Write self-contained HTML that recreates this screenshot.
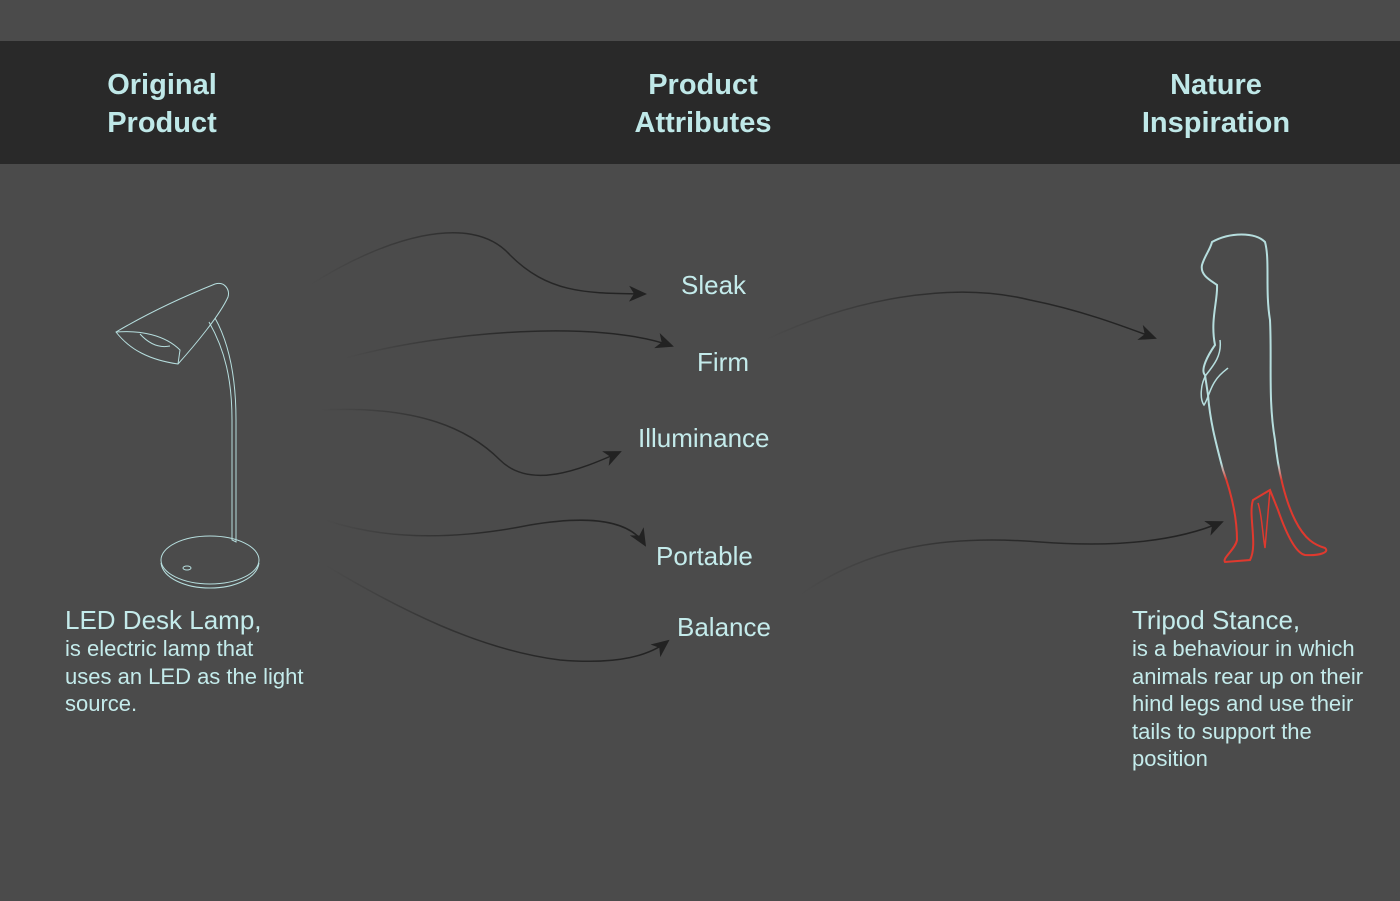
<!DOCTYPE html>
<html><head><meta charset="utf-8"><style>
body{margin:0;width:1400px;height:901px;background:#4b4b4b;overflow:hidden;font-family:"Liberation Sans",sans-serif;position:relative}
.hdr{position:absolute;left:0;top:41px;width:1400px;height:123px;background:#292929}
.h{position:absolute;color:#bfe8e8;font-size:29px;font-weight:bold;line-height:38px;text-align:center;width:300px}
.l{position:absolute;color:#c4ebeb;font-size:26px;font-weight:300}
.d{position:absolute;color:#c4ebeb;font-size:22px;line-height:27.5px}
.d b{font-weight:normal;font-size:26px;display:block;line-height:30px}
svg{position:absolute;left:0;top:0}
</style></head><body>
<div class="hdr"></div>
<div class="h" style="left:12px;top:66px">Original<br>Product</div>
<div class="h" style="left:553px;top:66px">Product<br>Attributes</div>
<div class="h" style="left:1066px;top:66px">Nature<br>Inspiration</div>
<div class="l" style="left:681px;top:270px">Sleak</div>
<div class="l" style="left:697px;top:347px">Firm</div>
<div class="l" style="left:638px;top:423px">Illuminance</div>
<div class="l" style="left:656px;top:541px">Portable</div>
<div class="l" style="left:677px;top:612px">Balance</div>
<div class="d" style="left:65px;top:605px"><b>LED Desk Lamp,</b>is electric lamp that<br>uses an LED as the light<br>source.</div>
<div class="d" style="left:1132px;top:605px"><b>Tripod Stance,</b>is a behaviour in which<br>animals rear up on their<br>hind legs and use their<br>tails to support the<br>position</div>
<svg width="1400" height="901" viewBox="0 0 1400 901">
<defs>
<linearGradient id="g1" x1="0" x2="1"><stop offset="0" stop-color="#222" stop-opacity="0"/><stop offset=".5" stop-color="#222" stop-opacity=".8"/><stop offset="1" stop-color="#222"/></linearGradient>
<linearGradient id="mk" x1="0" y1="0" x2="0" y2="1"><stop offset=".7" stop-color="#b6dede"/><stop offset=".75" stop-color="#e0392e"/></linearGradient>
<marker id="a" markerWidth="20" markerHeight="16" refX="16" refY="8" orient="auto" markerUnits="userSpaceOnUse"><path d="M0,0 L18,8 L0,16 L5,8z" fill="#222"/></marker>
</defs>
<g fill="none" stroke="url(#g1)" stroke-width="1.5" marker-end="url(#a)">
<path d="M310,285 C380,240 470,210 510,255 C550,295 590,293 645,294"/>
<path d="M345,358 C450,330 600,320 672,346"/>
<path d="M320,410 C420,405 470,430 500,460 C530,490 580,470 620,452"/>
<path d="M325,520 C400,545 480,535 530,525 C590,515 630,520 645,545"/>
<path d="M325,565 C400,610 480,650 560,660 C620,665 650,655 668,641"/>
<path d="M765,340 C850,300 950,280 1030,300 C1080,310 1120,325 1155,338"/>
<path d="M800,595 C870,545 950,535 1040,542 C1120,548 1180,540 1222,522"/>
</g>
<g fill="none" stroke="#b6dede" stroke-width="1">
<path d="M116,332 C150,312 185,296 215,284 C225,281 230,290 228,297 C220,315 195,345 178,364 C150,360 130,350 116,332Z"/>
<path d="M116,332 C140,330 165,335 180,350 L178,364"/>
<path d="M140,334 C150,345 160,348 170,346"/>
<path d="M209,322 C225,350 232,380 232,420 L232,540 L236,542 L236,420 C236,380 230,345 215,318"/>
<ellipse cx="210" cy="560" rx="49" ry="24"/>
<path d="M161,563 C163,578 185,588 210,588 C235,588 257,578 259,563"/>
<ellipse cx="187" cy="568" rx="4" ry="2"/>
</g>
<path fill="none" stroke="url(#mk)" stroke-width="2" d="M1212,242 C1230,232 1255,232 1265,242 C1270,260 1265,290 1270,320 C1272,360 1268,400 1275,440 C1278,470 1285,500 1295,520 C1305,540 1315,545 1325,548 C1330,552 1320,556 1305,555 C1295,553 1285,530 1278,510 L1270,490 L1253,500 C1248,515 1258,545 1250,560 L1225,562 C1222,558 1235,550 1237,540 C1237,520 1232,495 1223,470 C1215,440 1210,420 1208,395 L1205,375 C1200,370 1208,355 1215,345 C1210,320 1218,300 1217,285 C1210,280 1200,275 1202,265 C1205,255 1210,250 1212,242Z"/>
<g fill="none" stroke="#b6dede" stroke-width="1.5">
<path d="M1220,340 C1222,355 1214,365 1206,375 C1200,385 1200,400 1204,405 C1208,400 1210,385 1220,375 C1225,370 1226,370 1228,368"/>
</g>
<path fill="none" stroke="#e0392e" stroke-width="1.5" d="M1258,503 C1262,515 1262,530 1265,548 L1270,490"/>
</svg>
</body></html>
